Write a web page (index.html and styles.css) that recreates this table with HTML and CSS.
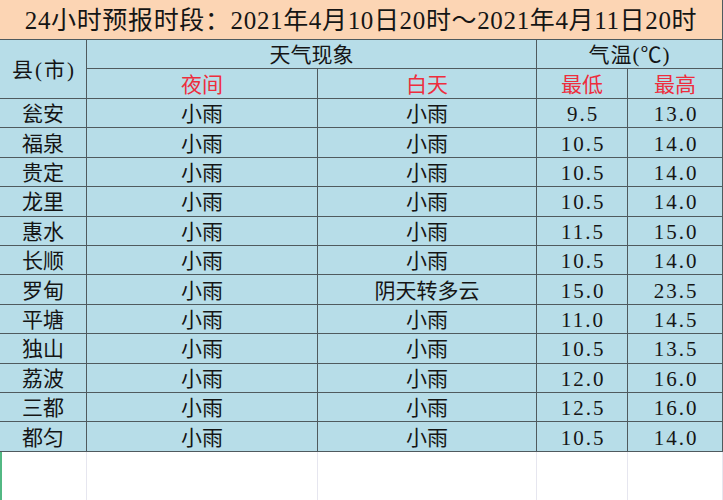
FILE: index.html
```html
<!DOCTYPE html>
<html lang="zh-CN">
<head>
<meta charset="utf-8">
<title>24小时预报</title>
<link rel="stylesheet" href="styles.css">
</head>
<body>
<div class="sheet">
  <div class="cell title">24小时预报时段：2021年4月10日20时～2021年4月11日20时</div>

  <div class="cell county">县(市)</div>
  <div class="cell span2">天气现象</div>
  <div class="cell span2 temp">气温(℃)</div>
  <div class="cell red">夜间</div>
  <div class="cell red">白天</div>
  <div class="cell red">最低</div>
  <div class="cell red">最高</div>

  <div class="cell">瓮安</div><div class="cell">小雨</div><div class="cell">小雨</div><div class="cell num">9.5</div><div class="cell num">13.0</div>
  <div class="cell">福泉</div><div class="cell">小雨</div><div class="cell">小雨</div><div class="cell num">10.5</div><div class="cell num">14.0</div>
  <div class="cell">贵定</div><div class="cell">小雨</div><div class="cell">小雨</div><div class="cell num">10.5</div><div class="cell num">14.0</div>
  <div class="cell">龙里</div><div class="cell">小雨</div><div class="cell">小雨</div><div class="cell num">10.5</div><div class="cell num">14.0</div>
  <div class="cell">惠水</div><div class="cell">小雨</div><div class="cell">小雨</div><div class="cell num">11.5</div><div class="cell num">15.0</div>
  <div class="cell">长顺</div><div class="cell">小雨</div><div class="cell">小雨</div><div class="cell num">10.5</div><div class="cell num">14.0</div>
  <div class="cell">罗甸</div><div class="cell">小雨</div><div class="cell">阴天转多云</div><div class="cell num">15.0</div><div class="cell num">23.5</div>
  <div class="cell">平塘</div><div class="cell">小雨</div><div class="cell">小雨</div><div class="cell num">11.0</div><div class="cell num">14.5</div>
  <div class="cell">独山</div><div class="cell">小雨</div><div class="cell">小雨</div><div class="cell num">10.5</div><div class="cell num">13.5</div>
  <div class="cell">荔波</div><div class="cell">小雨</div><div class="cell">小雨</div><div class="cell num">12.0</div><div class="cell num">16.0</div>
  <div class="cell">三都</div><div class="cell">小雨</div><div class="cell">小雨</div><div class="cell num">12.5</div><div class="cell num">16.0</div>
  <div class="cell">都匀</div><div class="cell">小雨</div><div class="cell">小雨</div><div class="cell num">10.5</div><div class="cell num">14.0</div>
</div>
<div class="blank">
  <div class="bcell selected"></div><div class="bcell"></div><div class="bcell"></div><div class="bcell"></div><div class="bcell"></div>
</div>
</body>
</html>
```

FILE: styles.css
```css
html, body {
  margin: 0;
  padding: 0;
  background: #ffffff;
}

body {
  width: 723px;
  height: 500px;
  overflow: hidden;
  font-family: "Liberation Serif", "Noto Sans CJK SC", serif;
  color: #151515;
}

.sheet {
  display: grid;
  grid-template-columns: 87px 231px 219px 91px 95px;
  grid-template-rows: 40px 29px 30px repeat(12, 29.42px);
  background: #b7dde8;
  width: 723px;
}

.cell {
  box-sizing: border-box;
  border-right: 1px solid #4f5a5e;
  border-bottom: 1px solid #4f5a5e;
  display: flex;
  align-items: center;
  justify-content: center;
  font-size: 21px;
  line-height: 1;
  padding-top: 3px;
  white-space: nowrap;
}

.title {
  grid-column: 1 / span 5;
  background: #fcd5b4;
  font-size: 25px;
  letter-spacing: 0.65px;
  padding-top: 1px;
}

.county {
  grid-row: span 2;
  letter-spacing: 2px;
  padding-left: 2px;
}

.temp {
  letter-spacing: 1px;
}

.span2 {
  grid-column: span 2;
}

.red {
  color: #ee2d3d;
}

.num {
  letter-spacing: 2px;
  padding-left: 2px;
}

.blank {
  display: grid;
  grid-template-columns: 87px 231px 219px 91px 95px;
  height: 48px;
}

.bcell {
  box-sizing: border-box;
  border-right: 1px solid #e6e6ef;
}

.selected {
  border-left: 2px solid #52b883;
}
```
